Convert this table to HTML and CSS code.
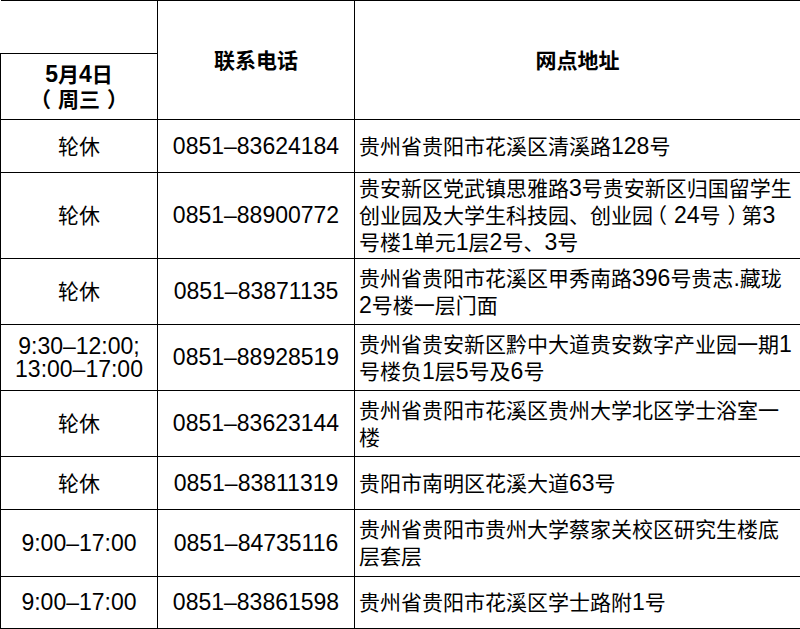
FILE: index.html
```html
<!DOCTYPE html>
<html lang="zh-CN">
<head>
<meta charset="utf-8">
<link rel="stylesheet" href="styles.css">
</head>
<body>
<table class="sched">
  <colgroup>
    <col class="c-time">
    <col class="c-phone">
    <col class="c-addr">
  </colgroup>
  <tr class="h-top">
    <td class="blank"></td>
    <th rowspan="2" class="head">联系电话</th>
    <th rowspan="2" class="head">网点地址</th>
  </tr>
  <tr class="h-bot">
    <th class="head date"><span class="n">5</span>月<span class="n">4</span>日<br><span class="po">（</span>周三<span class="pc">）</span></th>
  </tr>
  <tr class="r53">
    <td class="time">轮休</td>
    <td class="phone">0851–83624184</td>
    <td class="addr">贵州省贵阳市花溪区清溪路<span class="n">128</span>号</td>
  </tr>
  <tr class="r86">
    <td class="time">轮休</td>
    <td class="phone">0851–88900772</td>
    <td class="addr">贵安新区党武镇思雅路<span class="n">3</span>号贵安新区归国留学生创业园及大学生科技园、创业园<span class="po">（</span><span class="n">24</span>号<span class="pc">）</span>第<span class="n">3</span>号楼<span class="n">1</span>单元<span class="n">1</span>层<span class="n">2</span>号、<span class="n">3</span>号</td>
  </tr>
  <tr class="r66">
    <td class="time">轮休</td>
    <td class="phone">0851–83871135</td>
    <td class="addr">贵州省贵阳市花溪区甲秀南路<span class="n">396</span>号贵志<span class="n">.</span>藏珑<span class="n">2</span>号楼一层门面</td>
  </tr>
  <tr class="r66">
    <td class="time latin">9:30–12:00;<br>13:00–17:00</td>
    <td class="phone">0851–88928519</td>
    <td class="addr">贵州省贵安新区黔中大道贵安数字产业园一期<span class="n">1</span>号楼负<span class="n">1</span>层<span class="n">5</span>号及<span class="n">6</span>号</td>
  </tr>
  <tr class="r66">
    <td class="time">轮休</td>
    <td class="phone">0851–83623144</td>
    <td class="addr">贵州省贵阳市花溪区贵州大学北区学士浴室一楼</td>
  </tr>
  <tr class="r53">
    <td class="time">轮休</td>
    <td class="phone">0851–83811319</td>
    <td class="addr">贵阳市南明区花溪大道<span class="n">63</span>号</td>
  </tr>
  <tr class="r67">
    <td class="time latin">9:00–17:00</td>
    <td class="phone">0851–84735116</td>
    <td class="addr">贵州省贵阳市贵州大学蔡家关校区研究生楼底层套层</td>
  </tr>
  <tr class="r52">
    <td class="time latin">9:00–17:00</td>
    <td class="phone">0851–83861598</td>
    <td class="addr">贵州省贵阳市花溪区学士路附<span class="n">1</span>号</td>
  </tr>
</table>
</body>
</html>
```

FILE: styles.css
```css
html, body {
  margin: 0;
  padding: 0;
  background: #fff;
}

.sched {
  border-collapse: collapse;
  table-layout: fixed;
  width: 800px;
  font-family: "Liberation Sans", "Noto Sans CJK SC", sans-serif;
  font-size: 21px;
  color: #000;
}

.c-time { width: 157px; }
.c-phone { width: 197px; }
.c-addr { width: 446px; }

.sched td, .sched th {
  border: 1px solid #000;
  padding: 0;
  vertical-align: middle;
}

.sched td.blank {
  border-left: none;
}

.n {
  font-size: 23px;
}

/* fullwidth parentheses: glyph sits at the outer side of its em box */
.po {
  margin-left: -7px;
  padding-right: 7px;
}

.pc {
  margin-right: -7px;
  padding-left: 7px;
}

.head {
  font-weight: bold;
  text-align: center;
  line-height: 25px;
}

.h-top { height: 53px; }
.h-bot { height: 66px; }
.r53 { height: 53px; }
.r52 { height: 52px; }
.r66 { height: 66px; }
.r67 { height: 67px; }
.r86 { height: 86px; }

.time {
  text-align: center;
  line-height: 23px;
}

.time.latin {
  font-size: 23px;
}

.phone {
  text-align: center;
  font-size: 23px;
  line-height: 27px;
}

.sched td.addr {
  text-align: left;
  line-height: 27px;
  padding-left: 4px;
  padding-right: 7px;
}
```
